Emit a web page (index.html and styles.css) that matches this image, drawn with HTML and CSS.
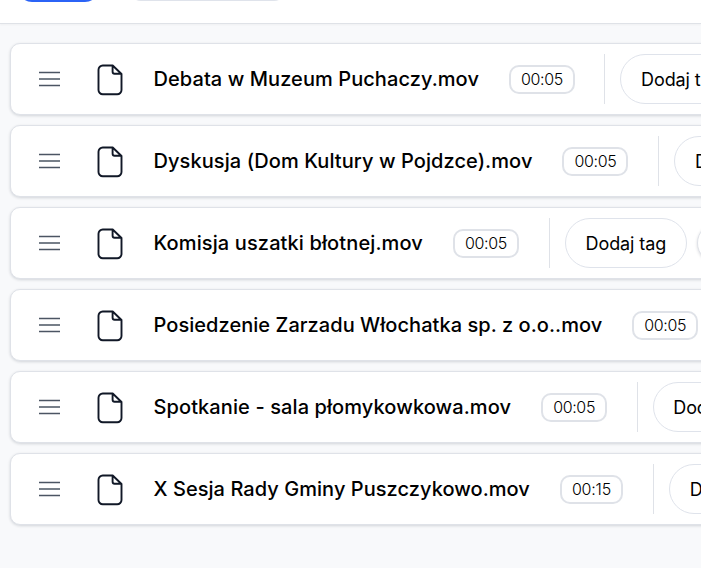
FILE: index.html
```html
<!DOCTYPE html>
<html lang="pl">
<head>
<meta charset="utf-8">
<title>Nagrania</title>
<link rel="stylesheet" href="styles.css">
</head>
<body>
<svg class="symbols" aria-hidden="true">
  <symbol id="bars" viewBox="0 0 22 16"><path d="M0 1.5h21M0 8h21M0 14.5h21"/></symbol>
  <symbol id="file" viewBox="0 0 26 32"><path d="M5.8 1.5h9.9L24.5 10v16a4.3 4.3 0 0 1-4.3 4.3H5.8A4.3 4.3 0 0 1 1.5 26V5.8a4.3 4.3 0 0 1 4.3-4.3zM15.6 1.5v6.2a2 2 0 0 0 2 2h6.6"/></symbol>
</svg>
<header class="toolbar"><div class="tab tab-active"></div><div class="tab"></div></header>
<main class="list">
  <article class="row"><svg class="bars"><use href="#bars"/></svg><svg class="file"><use href="#file"/></svg><h2 class="title">Debata w Muzeum Puchaczy.mov</h2><span class="time">00:05</span><div class="actions"><button class="tag">Dodaj tag</button><button class="more"></button></div></article>
  <article class="row"><svg class="bars"><use href="#bars"/></svg><svg class="file"><use href="#file"/></svg><h2 class="title">Dyskusja (Dom Kultury w Pojdzce).mov</h2><span class="time">00:05</span><div class="actions"><button class="tag">Dodaj tag</button><button class="more"></button></div></article>
  <article class="row"><svg class="bars"><use href="#bars"/></svg><svg class="file"><use href="#file"/></svg><h2 class="title">Komisja uszatki błotnej.mov</h2><span class="time">00:05</span><div class="actions"><button class="tag">Dodaj tag</button><button class="more"></button></div></article>
  <article class="row"><svg class="bars"><use href="#bars"/></svg><svg class="file"><use href="#file"/></svg><h2 class="title">Posiedzenie Zarzadu Włochatka sp. z o.o..mov</h2><span class="time">00:05</span><div class="actions"><button class="tag">Dodaj tag</button><button class="more"></button></div></article>
  <article class="row"><svg class="bars"><use href="#bars"/></svg><svg class="file"><use href="#file"/></svg><h2 class="title">Spotkanie - sala płomykowkowa.mov</h2><span class="time">00:05</span><div class="actions"><button class="tag">Dodaj tag</button><button class="more"></button></div></article>
  <article class="row"><svg class="bars"><use href="#bars"/></svg><svg class="file"><use href="#file"/></svg><h2 class="title">X Sesja Rady Gminy Puszczykowo.mov</h2><span class="time">00:15</span><div class="actions"><button class="tag">Dodaj tag</button><button class="more"></button></div></article>
</main>
</body>
</html>
```
FILE: styles.css
```css
* { box-sizing: border-box; }
body { margin: 0; height: 568px; overflow: hidden; background: #f8f9fb; color: #000; font-family: Inter, "Liberation Sans", sans-serif; }
.symbols { display: none; }
.toolbar { display: flex; gap: 30px; height: 24px; padding-left: 18px; background: #fff; border-bottom: 1px solid #dfe2e7; box-shadow: 0 1px 2px rgba(0,0,0,.04); }
.tab { width: 157px; height: 32px; margin-top: -31px; border: 2px solid #dfe3eb; border-radius: 12px; }
.tab-active { width: 81px; height: 33px; background: #2b63f6; border: 0; border-radius: 14px; }
.list { display: flex; flex-direction: column; gap: 10px; padding: 19px 0 20px 10px; overflow: hidden; }
.row { display: flex; align-items: center; width: 1000px; height: 72px; padding-left: 28px; background: #fff; border: 1px solid #dfe2e8; border-radius: 10px; box-shadow: 0 1px 3px rgba(15,23,42,.16); }
.bars, .file { flex: none; fill: none; }
.bars { width: 22px; height: 16px; stroke: #4b5563; stroke-width: 1.4; }
.file { width: 26px; height: 32px; margin: 1px 0 0 36px; stroke: #111827; stroke-width: 1.9; stroke-linejoin: round; }
.title { flex: none; margin: 0 0 0 30.5px; font-size: 20px; font-weight: 500; line-height: 28px; letter-spacing: .07px; white-space: nowrap; }
.row:nth-child(2) .title { letter-spacing: .08px; }
.row:nth-child(3) .title { letter-spacing: .12px; }
.row:nth-child(4) .title, .row:nth-child(6) .title { letter-spacing: .05px; }
.row:nth-child(5) .title { letter-spacing: .1px; }
.time { flex: none; height: 29px; margin-left: 30px; padding: 0 10px; border: 2px solid #dfe2e8; border-radius: 10px; font-size: 16px; font-weight: 300; line-height: 24px; letter-spacing: -.35px; }
.row:nth-child(6) .time { letter-spacing: -.2px; }
.actions { display: flex; flex: none; gap: 10px; align-items: center; height: 50px; margin-left: 30px; padding-left: 15px; border-left: 1px solid #dfe2e8; }
.row:nth-child(1) .actions, .row:nth-child(5) .actions { margin-left: 29.5px; }
.tag { width: 122px; height: 50px; padding: 0; border: 1px solid #dfe3eb; border-radius: 25px; background: #fff; color: #000; font: 400 18px Inter, sans-serif; letter-spacing: -.1px; }
.more { width: 48px; height: 40px; border: 1px solid #dfe2e8; border-radius: 20px; background: #fff; box-shadow: 0 1px 3px rgba(15,23,42,.15); }
```
